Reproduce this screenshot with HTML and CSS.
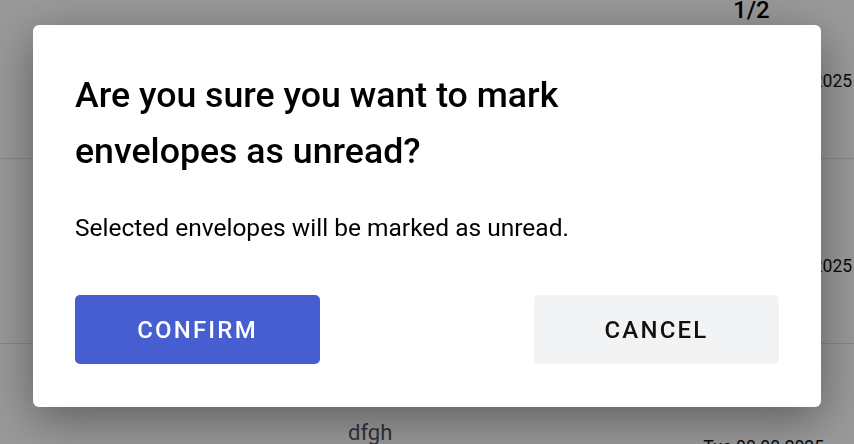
FILE: index.html
```html
<!DOCTYPE html>
<html lang="en">
<head>
<meta charset="utf-8">
<title>Mark as unread</title>
<link rel="stylesheet" href="styles.css">
</head>
<body>
<div class="page">
  <div class="list">
    <div class="row">
      <div class="row-index">1/2</div>
      <div class="row-subject"></div>
      <div class="row-date">Tue 00.00.2025 12:00</div>
    </div>
    <div class="row">
      <div class="row-index"></div>
      <div class="row-subject"></div>
      <div class="row-date">Tue 00.00.2025 12:00</div>
    </div>
    <div class="row">
      <div class="row-index"></div>
      <div class="row-subject row-subject-visible">dfgh</div>
      <div class="row-date row-date-last">Tue 00.00.2025</div>
    </div>
  </div>
</div>
<div class="overlay">
  <div class="dialog" role="dialog" aria-modal="true">
    <h2 class="dialog-title">Are you sure you want to mark envelopes as unread?</h2>
    <p class="dialog-text">Selected envelopes will be marked as unread.</p>
    <div class="dialog-actions">
      <button class="btn btn-primary">Confirm</button>
      <button class="btn btn-secondary">Cancel</button>
    </div>
  </div>
</div>
</body>
</html>
```
FILE: styles.css
```css
html, body {
  margin: 0;
  padding: 0;
  width: 854px;
  height: 444px;
  overflow: hidden;
  font-family: Roboto, "Noto Sans", Arial, sans-serif;
  background: #ffffff;
  color: #000;
}

.page {
  width: 854px;
  height: 444px;
  overflow: hidden;
}

.list {
  margin-top: -26px;
}

.row {
  height: 184px;
  border-bottom: 1px solid #e2e2e2;
  display: flex;
  align-items: flex-start;
  position: relative;
}

.row-index {
  position: absolute;
  top: 22px;
  left: 733px;
  font-size: 24px;
  font-weight: 500;
  color: #000;
}

.row-subject {
  margin-left: 348px;
  flex: 1;
  font-size: 22px;
  line-height: 26px;
  color: #4b5563;
}

.row-subject-visible {
  margin-top: 76px;
}

.row-date {
  margin-top: 97px;
  margin-right: -46px;
  font-size: 17.5px;
  line-height: 20px;
  color: #111;
  white-space: nowrap;
}

.row-date.row-date-last {
  margin-top: 93px;
  margin-right: 30px;
}

.overlay {
  position: fixed;
  inset: 0;
  background: rgba(0, 0, 0, 0.4);
  display: flex;
  align-items: center;
  justify-content: center;
  padding-bottom: 12px;
  box-sizing: border-box;
}

.dialog {
  width: 788px;
  box-sizing: border-box;
  background: #fff;
  border-radius: 6px;
  padding: 42px 42px 43px;
  box-shadow: 0 12px 48px rgba(0, 0, 0, 0.4);
}

.dialog-title {
  margin: 0;
  max-width: 580px;
  font-size: 35.7px;
  line-height: 56px;
  font-weight: 500;
  color: #000;
}

.dialog-text {
  margin: 34px 0 0;
  font-size: 24.5px;
  line-height: 30px;
  color: #000;
}

.dialog-actions {
  margin-top: 52px;
  display: flex;
  justify-content: space-between;
}

.btn {
  width: 245px;
  height: 69px;
  border: none;
  border-radius: 5px;
  font-family: Roboto, "Noto Sans", Arial, sans-serif;
  font-size: 24px;
  font-weight: 500;
  letter-spacing: 2.2px;
  text-transform: uppercase;
  cursor: pointer;
}

.btn-primary {
  background: #465ecf;
  color: #fff;
}

.btn-secondary {
  background: #f2f3f5;
  color: #111;
}
```
